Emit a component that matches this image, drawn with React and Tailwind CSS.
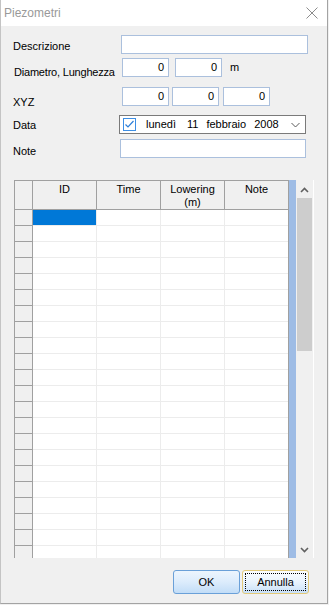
import React from 'react';

const COLS = [
  { id: 'id', label: 'ID', w: 'w-16' },
  { id: 'time', label: 'Time', w: 'w-16' },
  { id: 'lowering', label: 'Lowering (m)', w: 'w-16' },
];

const ROWS = Array.from({ length: 22 }, (_, i) => i);

function TextBox({ className = '', value }) {
  return (
    <div
      className={`h-[19px] border border-[#abc0dd] bg-white flex items-center justify-end pr-[4px] text-[11px] leading-[13px] text-black ${className}`}
    >
      {value}
    </div>
  );
}

function Chevron({ up }) {
  return (
    <svg width="9" height="6" viewBox="0 0 9 6" className="block">
      <path
        d={up ? 'M1 5 L4.5 1.5 L8 5' : 'M1 1 L4.5 4.5 L8 1'}
        fill="none"
        stroke="#606060"
        strokeWidth="1.6"
      />
    </svg>
  );
}

export default function App() {
  return (
    <div className="w-[329px] h-[605px] bg-[#f0f0f0] font-['Liberation_Sans',Arial,sans-serif] text-black">
      <div className="w-[328px] h-[604px] flex flex-col border-l border-r border-b border-l-[#c4c4c4] border-r-[#a3a3a3] border-b-[#a3a3a3] bg-[#f0f0f0]">
        {/* Title bar */}
        <div className="h-[26px] shrink-0 bg-white flex items-center">
          <span className="pl-[3px] text-[12px] leading-[14px] text-[#999999]">Piezometri</span>
          <svg width="12" height="12" viewBox="0 0 12 12" className="ml-auto mr-[9px]">
            <path d="M0.5 0.5 L11.5 11.5 M11.5 0.5 L0.5 11.5" stroke="#8c8c8c" strokeWidth="1" fill="none" />
          </svg>
        </div>

        {/* Form */}
        <div className="flex mt-[9px] h-[19px] text-[11px] leading-[13px]">
          <div className="w-[120px] pl-[12px] pt-[5px]">Descrizione</div>
          <TextBox className="w-[187px]" />
        </div>

        <div className="flex mt-[4px] h-[19px] text-[11px] leading-[13px]">
          <div className="w-[121px] pl-[13px] pt-[8px] whitespace-nowrap tracking-[-0.2px]">Diametro, Lunghezza</div>
          <TextBox className="w-[47px]" value="0" />
          <TextBox className="w-[47px] ml-[6px]" value="0" />
          <span className="ml-[8px] pt-[3px]">m</span>
        </div>

        <div className="flex mt-[10px] h-[19px] text-[11px] leading-[13px]">
          <div className="w-[121px] pl-[12px] pt-[9px]">XYZ</div>
          <TextBox className="w-[47px]" value="0" />
          <TextBox className="w-[47px] ml-[3px]" value="0" />
          <TextBox className="w-[47px] ml-[4px]" value="0" />
        </div>

        <div className="flex mt-[9px] h-[19px] text-[11px] leading-[13px]">
          <div className="w-[118px] pl-[12px] pt-[4px]">Data</div>
          <div className="w-[187px] h-[19px] border border-[#7a7a7a] bg-white flex items-center">
            <svg width="13" height="13" viewBox="0 0 13 13" className="ml-[3px] shrink-0">
              <rect x="0.5" y="0.5" width="12" height="12" fill="white" stroke="#3d8ee4" />
              <path d="M2.5 6.5 L5 9 L10.5 3" fill="none" stroke="#2e7fd8" strokeWidth="1.2" />
            </svg>
            <span className="ml-[10px]">lunedì</span>
            <span className="ml-[11px]">11</span>
            <span className="ml-[8px]">febbraio</span>
            <span className="ml-[8px]">2008</span>
            <svg width="9" height="6" viewBox="0 0 9 6" className="ml-auto mr-[5px]">
              <path d="M0.5 1 L4.5 5 L8.5 1" fill="none" stroke="#5a5a5a" strokeWidth="1" />
            </svg>
          </div>
        </div>

        <div className="flex mt-[5px] h-[19px] text-[11px] leading-[13px]">
          <div className="w-[119px] pl-[12px] pt-[6px]">Note</div>
          <TextBox className="w-[186px]" />
        </div>

        {/* Grid */}
        <div className="flex mt-[22px] ml-[13px] h-[378px] w-[300px] shrink-0">
          <div className="w-[275px] h-full flex flex-col border-l border-t border-r border-[#a0a0a0] bg-white overflow-hidden">
            <div className="flex h-[29px] shrink-0 bg-[#f0f0f0] border-b border-[#a0a0a0] text-[11px] leading-[13px]">
              <div className="w-[18px] h-full border-r border-[#a0a0a0]" />
              {COLS.map((c) => (
                <div key={c.id} className={`${c.w} h-full border-r border-[#a0a0a0] text-center pt-[2px] px-[6px]`}>
                  {c.label}
                </div>
              ))}
              <div className="w-[63px] h-full text-center pt-[2px]">Note</div>
            </div>
            {ROWS.map((i) => (
              <div key={i} className="flex h-4 shrink-0">
                <div className="w-[18px] h-full bg-[#f0f0f0] border-r border-b border-[#a0a0a0]" />
                <div className={`w-16 h-full border-r border-b border-[#ececec] ${i === 0 ? 'bg-[#0078d7]' : 'bg-white'}`} />
                <div className="w-16 h-full border-r border-b border-[#ececec]" />
                <div className="w-16 h-full border-r border-b border-[#ececec]" />
                <div className="w-[63px] h-full border-b border-[#ececec]" />
              </div>
            ))}
          </div>
          <div className="w-[7px] h-full bg-[#9ebce5]" />
          <div className="w-[17px] h-full flex flex-col bg-[#f0f0f0]">
            <div className="h-[17px] flex items-center justify-center mt-px">
              <Chevron up />
            </div>
            <div className="mx-px h-[153px] bg-[#cdcdcd]" />
            <div className="mt-auto h-[17px] flex items-center justify-center">
              <Chevron />
            </div>
          </div>
          <div className="w-px h-full bg-white" />
        </div>

        {/* Buttons */}
        <div className="flex justify-end mt-[12px] mr-[18px] gap-[2px] text-[11px] leading-[13px]">
          <button className="w-[67px] h-[24px] rounded-[3px] border border-[#6aa0d8] bg-linear-to-b from-[#edf5fd] via-[#dcecfc] to-[#c2ddf7] flex items-center justify-center">
            OK
          </button>
          <button className="w-[67px] h-[24px] rounded-[3px] border border-[#e2c978] bg-linear-to-b from-[#fbfdff] via-[#e9f3fd] to-[#c8e0f8] p-[2px]">
            <span className="w-full h-full flex items-center justify-center border border-dotted border-black">
              Annulla
            </span>
          </button>
        </div>
      </div>
    </div>
  );
}
